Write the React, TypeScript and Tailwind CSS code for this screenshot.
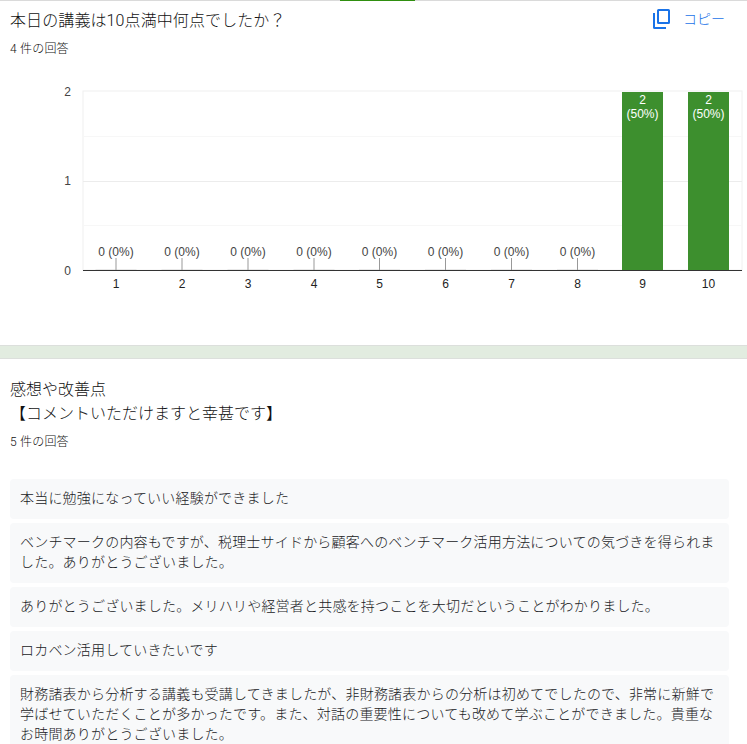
const font = "font-['Roboto','Noto_Sans_CJK_JP',sans-serif]"

const categories = ["1", "2", "3", "4", "5", "6", "7", "8", "9", "10"]
const centers = [116, 182, 248, 314, 379.5, 445.5, 511.5, 577.5, 642.5, 708.5]

const answers = [
  "本当に勉強になっていい経験ができました",
  "ベンチマークの内容もですが、税理士サイドから顧客へのベンチマーク活用方法についての気づきを得られました。ありがとうございました。",
  "ありがとうございました。メリハリや経営者と共感を持つことを大切だということがわかりました。",
  "ロカベン活用していきたいです",
  "財務諸表から分析する講義も受講してきましたが、非財務諸表からの分析は初めてでしたので、非常に新鮮で学ばせていただくことが多かったです。また、対話の重要性についても改めて学ぶことができました。貴重なお時間ありがとうございました。",
]

const Chart = () => {
  return (
    <svg width="747" height="265" viewBox="0 80 747 265" className="block">
      <g fontFamily="'Liberation Sans', Arial, sans-serif" fontSize="12">
        <rect x="83" y="91" width="659" height="179" fill="none" stroke="#f0f0f0" strokeWidth="1" />
        <line x1="83" x2="742" y1="136.5" y2="136.5" stroke="#f7f7f7" />
        <line x1="83" x2="742" y1="181.5" y2="181.5" stroke="#ececec" />
        <line x1="83" x2="742" y1="225.5" y2="225.5" stroke="#f7f7f7" />
        <text x="71" y="96" textAnchor="end" fill="#444">2</text>
        <text x="71" y="185" textAnchor="end" fill="#444">1</text>
        <text x="71" y="275" textAnchor="end" fill="#444">0</text>
        {centers.slice(0, 8).map((c) => (
          <g key={c}>
            <rect x={c - 20.5} y="269" width="41" height="1" fill="#e8e8e8" />
            <line x1={c} x2={c} y1="258" y2="270" stroke="#999" />
            <text x={c} y="256" textAnchor="middle" fill="#444">0 (0%)</text>
          </g>
        ))}
        {centers.slice(8).map((c) => (
          <g key={c}>
            <rect x={c - 20.5} y="92" width="41" height="178" fill="#3d8f2e" />
            <text x={c} y="104" textAnchor="middle" fill="#fff">2</text>
            <text x={c} y="118" textAnchor="middle" fill="#fff">(50%)</text>
          </g>
        ))}
        <line x1="83" x2="742" y1="270.5" y2="270.5" stroke="#333" />
        {categories.map((label, i) => (
          <text key={label} x={centers[i]} y="288" textAnchor="middle" fill="#222">{label}</text>
        ))}
      </g>
    </svg>
  )
}

const App = () => {
  return (
    <div className={`w-[747px] h-[744px] overflow-hidden bg-white text-[#111111] font-light ${font}`}>
      <div className="flex h-px bg-[#dadada]">
        <div className="ml-[340px] w-[75px] bg-[#2f8f0f]" />
      </div>
      <div className="flex items-start justify-between pl-2.5 pr-[22px] pt-2">
        <div className="text-base leading-6 tracking-[0.1px]">本日の講義は10点満中何点でしたか？</div>
        <div className="flex items-center gap-[13px] text-[#1a73e8] text-sm leading-5">
          <svg width="17" height="20" viewBox="0 0 17 20" fill="none" stroke="#1a73e8" strokeWidth="2">
            <rect x="5" y="1" width="11" height="13" rx="0.5" />
            <path d="M1 4V18.500a0.500 0.500 0 0 0 0.500 0.500H13" />
          </svg>
          <span>コピー</span>
        </div>
      </div>
      <div className="pl-2.5 mt-[6px] text-xs leading-5 tracking-[0.2px]">4 件の回答</div>
      <div className="mt-[21px]">
        <Chart />
      </div>
      <div className="h-[14px] bg-[#e2ece0] border-y border-[#dcdfdc]" />
      <div className="pl-2.5 pt-[19px] text-base leading-6">
        <div>感想や改善点</div>
        <div>【コメントいただけますと幸甚です】</div>
      </div>
      <div className="pl-2.5 mt-[6px] text-xs leading-5 tracking-[0.2px]">5 件の回答</div>
      <div className="mt-[27px] ml-2.5 w-[719px] flex flex-col gap-1">
        {answers.map((a) => (
          <div key={a} className="bg-[#f8f9fa] rounded pl-2.5 pr-2.5 pt-[9px] pb-[11px] text-sm leading-5 tracking-[0.2px] text-[#202124]">
            {a}
          </div>
        ))}
      </div>
    </div>
  )
}

export default App
